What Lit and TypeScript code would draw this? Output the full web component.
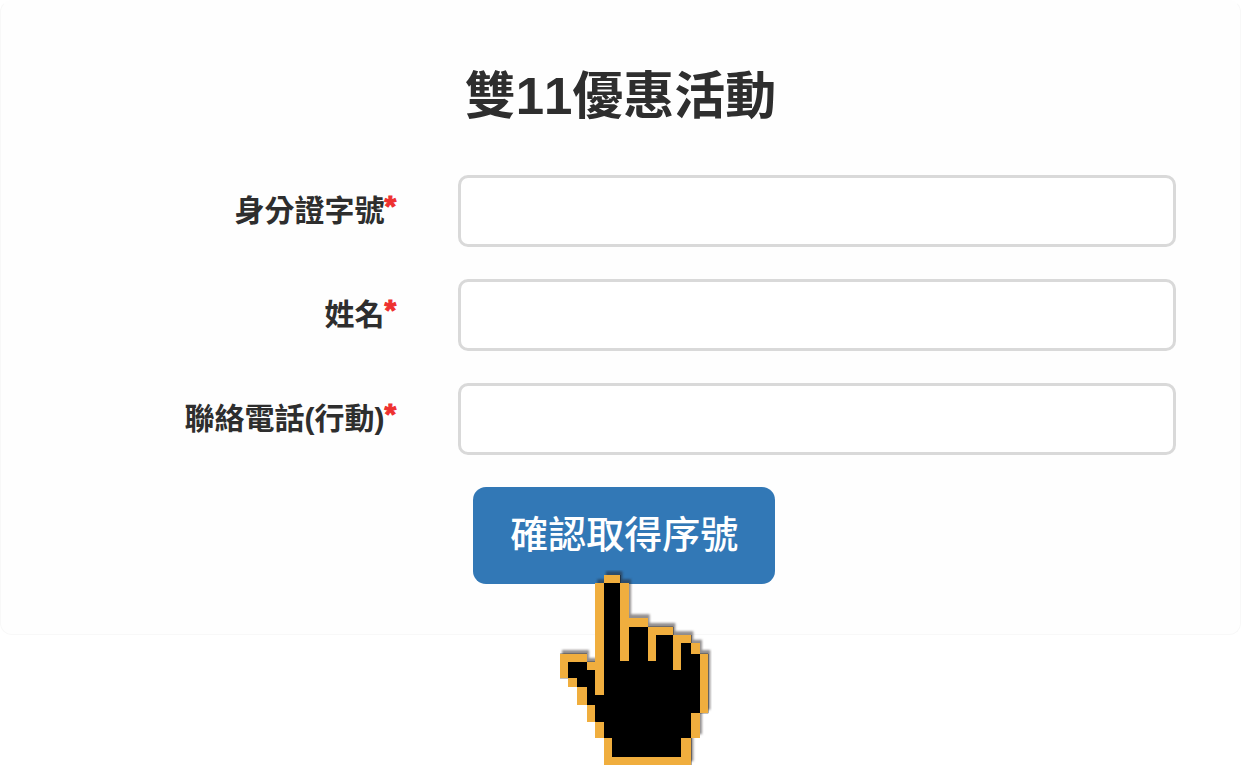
import { LitElement, html, css, svg } from "lit";
import { customElement } from "lit/decorators.js";

interface Field {
  id: string;
  label: string;
  type: string;
}

const FIELDS: Field[] = [
  { id: "id-number", label: "身分證字號", type: "text" },
  { id: "name", label: "姓名", type: "text" },
  { id: "mobile", label: "聯絡電話(行動)", type: "tel" },
];

// Silhouette of the pointing hand, reused for its shadow and its fill.
const HAND =
  "M192 45H241V69H267V174H323V200H400V225H454V250H480V281H505V460H480V534H454V615H192V534H166V485H141V435H111V380H85V355H60V281H141V305H166V69H192Z";

const OUTLINE =
  "M192 45H241V69H192Z M166 69H192V404H166Z M241 69H267V174H323V200H267V304H241Z M323 200H400V225H348V304H323Z M400 225H454V250H423V329H400Z M454 250H480V281H454Z M480 281H505V460H480Z M454 460H480V534H454Z M192 534H216V590H423V534H454V615H192Z M166 485H192V534H166Z M141 435H166V485H141Z M111 380H141V435H111Z M85 355H111V380H85Z M60 281H141V305H85V355H60Z M141 305H166V330H141Z";

@customElement("pointer-hand")
export class PointerHand extends LitElement {
  static styles = css`
    :host {
      display: block;
      width: 152px;
      height: 195px;
    }
    .hand {
      display: block;
      width: 100%;
      height: 100%;
    }
    .shadow {
      fill: #282020;
      fill-opacity: 0.5;
      filter: blur(3px);
    }
    .fill {
      fill: #000;
    }
    .outline {
      fill: #f0ae3e;
    }
  `;

  render() {
    return html`<svg class="hand" viewBox="60 30 456 585" aria-hidden="true">
      ${svg`
        <path class="shadow" transform="translate(6 -11)" d=${HAND}></path>
        <path class="fill" d=${HAND}></path>
        <path class="outline" shape-rendering="crispEdges" d=${OUTLINE}></path>
      `}
    </svg>`;
  }
}

@customElement("app-root")
export class AppRoot extends LitElement {
  static styles = css`
    :host {
      display: block;
      min-height: 100vh;
      background: #fff;
      color: #2e2e2e;
      font-family: "Liberation Sans", "Noto Sans CJK TC", sans-serif;
    }
    * {
      box-sizing: border-box;
    }
    .card {
      padding: 64px 64px 50px;
      border: 1px solid #f8f8f8;
      border-top-color: #fefefe;
      border-radius: 12px;
      background: #fefefe;
    }
    .title {
      margin: 0 0 46px;
      font-size: 51px;
      line-height: 64px;
      font-weight: 700;
      font-kerning: none;
      text-align: center;
    }
    .form {
      display: grid;
      gap: 32px;
    }
    .row {
      display: grid;
      grid-template-columns: 6fr 13fr;
      column-gap: 62px;
      align-items: center;
    }
    .label {
      font-size: 30px;
      line-height: 40px;
      font-weight: 700;
      text-align: right;
      white-space: nowrap;
    }
    .required {
      color: #ee3030;
      line-height: 0;
      vertical-align: 5px;
      -webkit-text-stroke: 1px #ee3030;
    }
    .input {
      width: 100%;
      height: 72px;
      padding: 0 24px;
      border: 3px solid #d9d9d9;
      border-radius: 10px;
      background: #fff;
      color: inherit;
      font: inherit;
      font-size: 30px;
    }
    .actions {
      position: relative;
      grid-column: 2;
      justify-self: start;
      margin-left: 15px;
    }
    .submit {
      display: block;
      height: 97px;
      padding: 0 37px 2px;
      border: 0;
      border-radius: 13px;
      background: #3278b6;
      color: #fff;
      font: inherit;
      font-size: 38px;
      font-weight: 500;
      line-height: 56px;
      cursor: pointer;
    }
    .pointer {
      position: absolute;
      left: 87px;
      top: 83px;
      pointer-events: none;
    }
  `;

  render() {
    return html`
      <main class="card">
        <h1 class="title">雙11優惠活動</h1>
        <form class="form" @submit=${(e: Event) => e.preventDefault()}>
          ${FIELDS.map(
            (f) => html`<div class="row">
              <label class="label" for=${f.id}
                >${f.label}<span class="required">*</span></label
              >
              <input class="input" id=${f.id} name=${f.id} type=${f.type} required />
            </div>`
          )}
          <div class="row">
            <div class="actions">
              <button class="submit" type="submit">確認取得序號</button>
              <pointer-hand class="pointer"></pointer-hand>
            </div>
          </div>
        </form>
      </main>
    `;
  }
}
